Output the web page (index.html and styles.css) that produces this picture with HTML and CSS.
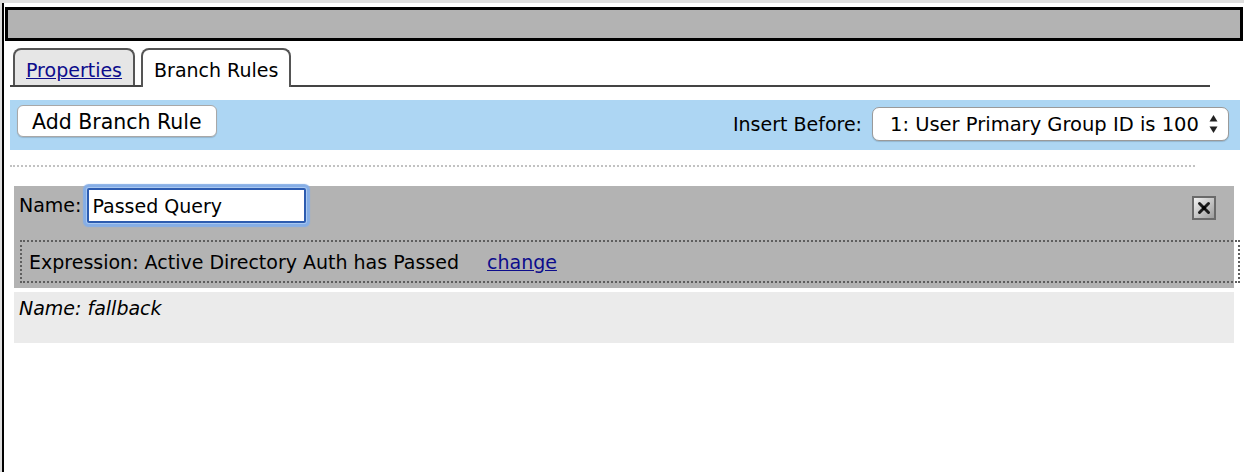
FILE: index.html
```html
<!DOCTYPE html>
<html>
<head>
<meta charset="utf-8">
<link rel="stylesheet" href="styles.css">
</head>
<body>
<div class="frame">
  <div class="titlebar"></div>
  <div class="tabs">
    <div class="tab"><a href="#" class="tab-link">Properties</a></div>
    <div class="tab tab-active">Branch Rules</div>
  </div>
  <div class="toolbar">
    <button class="btn">Add Branch Rule</button>
    <div class="insert">
      <span class="insert-label">Insert Before:</span>
      <div class="select">
        <span class="select-text">1: User Primary Group ID is 100</span>
        <svg class="select-arrows" width="9" height="20" viewBox="0 0 9 20">
          <polygon points="0.5,7.5 4.5,1 8.5,7.5" fill="#222"/>
          <polygon points="0.5,12.5 4.5,19 8.5,12.5" fill="#222"/>
        </svg>
      </div>
    </div>
  </div>
  <div class="sep"></div>
  <div class="rule">
    <div class="rule-head">
      <span class="rule-label">Name:</span>
      <input class="rule-input" type="text" value="Passed Query">
      <svg class="close" width="24" height="24" viewBox="0 0 24 24">
        <defs>
          <linearGradient id="cg" x1="0" y1="0" x2="1" y2="1">
            <stop offset="0" stop-color="#f2f2f2"/>
            <stop offset="1" stop-color="#9c9c9c"/>
          </linearGradient>
        </defs>
        <rect x="0" y="0" width="24" height="24" fill="#6a6a6a"/>
        <rect x="2" y="2" width="20" height="20" fill="url(#cg)"/>
        <path d="M7.5 7.5 L16.5 16.5 M16.5 7.5 L7.5 16.5" stroke="#1c1c1c" stroke-width="3" stroke-linecap="round"/>
        <circle cx="12" cy="12" r="2" fill="#000"/>
      </svg>
    </div>
    <div class="expr">Expression: Active Directory Auth has Passed<a href="#" class="expr-link">change</a></div>
  </div>
  <div class="fallback">Name: fallback</div>
</div>
</body>
</html>
```
FILE: styles.css
```css
html, body {
  margin: 0;
  padding: 0;
}
body {
  background: #dedede;
  font-family: "DejaVu Sans", Verdana, sans-serif;
  font-size: 19px;
  color: #000;
  width: 1244px;
  height: 472px;
  overflow: hidden;
}
.frame {
  margin-top: 3px;
  margin-left: 2px;
  height: 469px;
  background: #fff;
  border-left: 2px solid #000;
  overflow: hidden;
}
.titlebar {
  margin: 4px 1px 0 1px;
  height: 34px;
  box-sizing: border-box;
  border: 3px solid #000;
  background: #b3b3b3;
}
.tabs {
  margin: 7px 0 0 6px;
  width: 1200px;
  display: flex;
  align-items: flex-end;
  gap: 6px;
  padding-left: 3px;
  box-sizing: border-box;
  border-bottom: 2px solid #444;
  height: 39px;
}
.tab {
  height: 29px;
  padding: 6px 11px 0 11px;
  line-height: 29px;
  border: 2px solid #555;
  border-bottom: none;
  border-radius: 8px 8px 0 0;
  background: #e6e6e6;
  white-space: nowrap;
}
.tab-active {
  background: #fff;
  margin-bottom: -2px;
  padding-bottom: 2px;
}
.tab-link {
  color: #0c0c8c;
  text-decoration: underline;
}
.toolbar {
  margin: 13px 0 0 6px;
  width: 1230px;
  height: 50px;
  box-sizing: border-box;
  background: #add6f3;
  display: flex;
  align-items: flex-start;
  padding: 5px 11px 0 7px;
}
.btn {
  height: 32px;
  padding: 2px 14px 0 14px;
  font-family: "DejaVu Sans", Verdana, sans-serif;
  font-size: 20.5px;
  color: #000;
  background: #fff;
  border: 1px solid #a8a8a8;
  border-radius: 6px;
  box-shadow: 0 1px 1px rgba(0,0,0,0.15);
  line-height: 28px;
}
.insert {
  margin-left: auto;
  display: flex;
  align-items: center;
  height: 34px;
  margin-top: 2px;
  gap: 10px;
}
.insert-label {
  line-height: 34px;
}
.select {
  width: 357px;
  height: 34px;
  box-sizing: border-box;
  border: 1px solid #9a9a9a;
  border-radius: 7px;
  background: #fff;
  box-shadow: 0 1px 1px rgba(0,0,0,0.15);
  display: flex;
  align-items: center;
  padding: 0 10px 0 17px;
  font-size: 19.5px;
}
.select-text {
  flex: 1;
  white-space: nowrap;
}
.select-arrows {
  display: block;
}
.sep {
  margin: 15px 0 0 6px;
  width: 1185px;
  border-top: 2px dotted #c2c2c2;
}
.rule {
  margin: 19px 0 0 10px;
  width: 1220px;
  background: #b3b3b3;
  padding-bottom: 5px;
}
.rule-head {
  display: flex;
  align-items: flex-start;
  padding: 2px 0 0 5px;
  height: 35px;
}
.rule-label {
  line-height: 35px;
}
.rule-input {
  margin: 0 0 0 6px;
  width: 219px;
  height: 35px;
  box-sizing: border-box;
  border: 2px solid #2d5cb0;
  border-radius: 2px;
  box-shadow: 0 0 0 1px #a9c8f0, 0 0 1px 4px #86aee6;
  padding: 0 0 0 3px;
  font-family: "DejaVu Sans", Verdana, sans-serif;
  font-size: 19px;
  color: #000;
  background: #fff;
  outline: none;
}
.close {
  display: block;
  margin: 8px 18px 0 auto;
}
.expr {
  margin: 17px 0 0 6px;
  width: 1220px;
  height: 43px;
  box-sizing: border-box;
  border: 2px dotted #5e5e5e;
  padding: 1px 0 0 7px;
  line-height: 38px;
  white-space: nowrap;
}
.expr-link {
  margin-left: 28px;
  color: #0c0c8c;
  text-decoration: underline;
}
.fallback {
  margin: 4px 0 0 10px;
  width: 1220px;
  height: 51px;
  box-sizing: border-box;
  background: #ebebeb;
  padding: 5px 0 0 5px;
  line-height: 22px;
  font-style: italic;
}
```
